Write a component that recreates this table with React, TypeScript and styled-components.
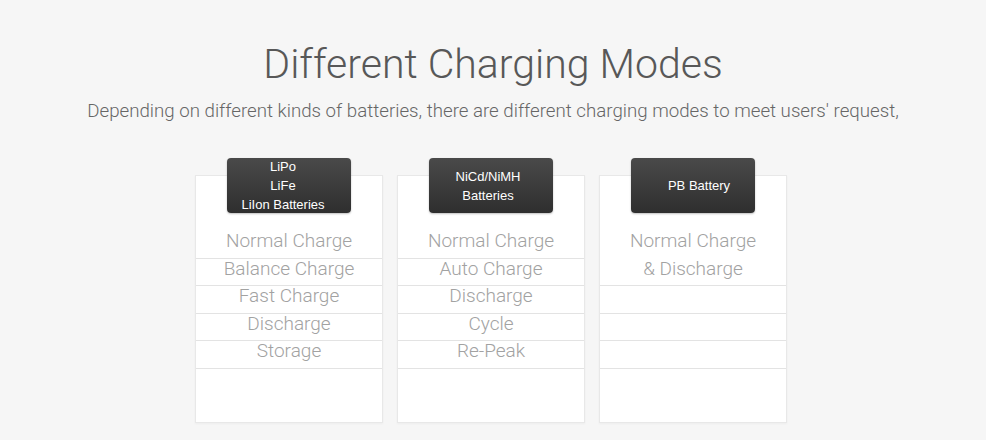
import * as React from 'react';
import styled, { createGlobalStyle } from 'styled-components';

const GlobalStyle = createGlobalStyle`
  html, body {
    margin: 0;
    padding: 0;
    background: #f6f6f6;
  }
  body {
    font-family: "Helvetica Neue", Roboto, "Liberation Sans", Arial, sans-serif;
  }
`;

const Page = styled.div`
  width: 986px;
  height: 440px;
  overflow: hidden;
  padding-top: 38px;
  box-sizing: border-box;
  background: #f6f6f6;
`;

const Header = styled.div`
  text-align: center;
`;

const Title = styled.h1`
  margin: 0;
  font-size: 41px;
  line-height: 52px;
  font-weight: 300;
  color: #585858;
`;

const Subtitle = styled.p`
  margin: 9px 0 0;
  font-size: 18.7px;
  line-height: 24px;
  font-weight: 300;
  color: #666;
`;

const CardRow = styled.div`
  display: flex;
  justify-content: center;
  gap: 14px;
  margin-top: 35px;
  padding-right: 4px;
`;

const Column = styled.div`
  display: flex;
  flex-direction: column;
  align-items: center;
  width: 188px;
`;

const Badge = styled.div<{ $shift: number }>`
  position: relative;
  z-index: 1;
  width: 124px;
  height: 55px;
  box-sizing: border-box;
  padding-left: ${(p) => Math.max(0, p.$shift * 2)}px;
  padding-right: ${(p) => Math.max(0, -p.$shift * 2)}px;
  border-radius: 4px;
  background: linear-gradient(to bottom, #4a4a4a 0%, #2e2e2e 100%);
  box-shadow: 0 1px 2px rgba(0, 0, 0, 0.25);
  color: #fff;
  font-family: "Liberation Sans", Arial, sans-serif;
  font-size: 13px;
  line-height: 19px;
  display: flex;
  align-items: center;
  justify-content: center;
  text-align: center;
`;

const Card = styled.div`
  width: 188px;
  min-height: 248px;
  margin-top: -38px;
  padding: 55px 0 0;
  box-sizing: border-box;
  background: #fff;
  border: 1px solid #e8e8e8;
  box-shadow: 0 1px 2px rgba(0, 0, 0, 0.04);
`;

const Row = styled.div<{ $lines?: number }>`
  height: ${(p) => (p.$lines ?? 1) * 27.5}px;
  box-sizing: border-box;
  padding-bottom: 7px;
  border-bottom: 1px solid #e3e3e3;
  display: flex;
  align-items: center;
  justify-content: center;
  text-align: center;
  font-size: 19px;
  line-height: 27.5px;
  font-weight: 300;
  color: #a2a2a2;
`;

type Mode = { text: string[]; lines?: number };

const groups: { badge: string[]; shift: number; modes: Mode[] }[] = [
  {
    badge: ['LiPo', 'LiFe', 'LiIon Batteries'],
    shift: -6,
    modes: [
      { text: ['Normal Charge'] },
      { text: ['Balance Charge'] },
      { text: ['Fast Charge'] },
      { text: ['Discharge'] },
      { text: ['Storage'] },
    ],
  },
  {
    badge: ['NiCd/NiMH', 'Batteries'],
    shift: -3,
    modes: [
      { text: ['Normal Charge'] },
      { text: ['Auto Charge'] },
      { text: ['Discharge'] },
      { text: ['Cycle'] },
      { text: ['Re-Peak'] },
    ],
  },
  {
    badge: ['PB Battery'],
    shift: 6,
    modes: [
      { text: ['Normal Charge', '& Discharge'], lines: 2 },
      { text: [] },
      { text: [] },
      { text: [] },
    ],
  },
];

const App = () => {
  return (
    <>
      <GlobalStyle />
      <Page>
        <Header>
          <Title>Different Charging Modes</Title>
          <Subtitle>
            Depending on different kinds of batteries, there are different charging modes to meet users' request,
          </Subtitle>
        </Header>
        <CardRow>
          {groups.map((g, i) => (
            <Column key={i}>
              <Badge $shift={g.shift}>
                <div>
                  {g.badge.map((b) => (
                    <div key={b}>{b}</div>
                  ))}
                </div>
              </Badge>
              <Card>
                {g.modes.map((m, j) => (
                  <Row key={j} $lines={m.lines}>
                    <div>
                      {m.text.map((t) => (
                        <div key={t}>{t}</div>
                      ))}
                    </div>
                  </Row>
                ))}
              </Card>
            </Column>
          ))}
        </CardRow>
      </Page>
    </>
  );
};

export default App;
